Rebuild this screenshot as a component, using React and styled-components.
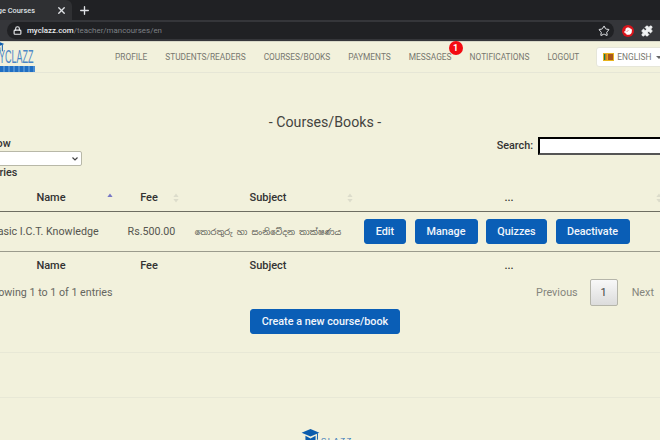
import React from 'react';
import styled, { createGlobalStyle } from 'styled-components';
import { Lock, Star, Plus, X, Puzzle, Hand } from 'lucide-react';

const GlobalStyle = createGlobalStyle`
  html, body {
    margin: 0;
    padding: 0;
    width: 660px;
    height: 440px;
    overflow: hidden;
    background: #f2f1dc;
    font-family: Roboto, "Liberation Sans", sans-serif;
  }
`;

const CapIcon = ({ size }) => (
  <svg width={size} height={size} viewBox="0 0 30 30">
    <path d="M1 9 L15 3 L29 9 L15 15 Z" fill="#0b5cad" />
    <path d="M7 14 L7 20 Q15 25 23 20 L23 14 L15 18 Z" fill="#0b5cad" />
    <path d="M26 10 L26 20" stroke="#0b5cad" strokeWidth="1.5" />
  </svg>
);

const Flag = () => (
  <svg width="11" height="8" viewBox="0 0 11 8">
    <rect width="11" height="8" fill="#e8b31c" />
    <rect x="1" y="1" width="1.6" height="6" fill="#1d7a4a" />
    <rect x="2.6" y="1" width="1.6" height="6" fill="#e8801c" />
    <rect x="5" y="1" width="5" height="6" fill="#a8571d" />
  </svg>
);

const SortMark = ({ active, left }) => (
  <SortIcon $left={left} viewBox="0 0 6 10">
    <path d="M3 0.5 L5.6 4 L0.4 4 Z" fill={active ? '#7777c4' : '#dcdccb'} />
    {!active && <path d="M3 9.5 L5.6 6 L0.4 6 Z" fill="#dcdccb" />}
  </SortIcon>
);

const App = () => {
  return (
    <>
      <GlobalStyle />
      <Browser>
        <TabStrip>
          <Tab>
            <TabTitle>Manage Courses</TabTitle>
            <TabClose size={11} strokeWidth={3} color="#dfe1e5" />
          </Tab>
          <Plus size={13} strokeWidth={2.5} color="#dfe1e5" />
        </TabStrip>
        <AddressRow>
          <UrlPill>
            <Lock size={9} strokeWidth={3} color="#e8eaed" />
            <Url>
              <b>myclazz.com</b>/teacher/mancourses/en
            </Url>
            <Star size={12} color="#e8eaed" />
          </UrlPill>
          <ExtBadge>
            <Hand size={8} strokeWidth={3} color="#fff" fill="#fff" />
          </ExtBadge>
          <ExtPuzzle size={12} color="#f1f3f4" fill="#f1f3f4" />
          <ProfileDot />
        </AddressRow>
      </Browser>

      <NavBar>
        <Brand>
          <BrandMark>
            <CapIcon size={20} />
          </BrandMark>
          <BrandName>YCLAZZ</BrandName>
          <BrandBar />
        </Brand>
        <NavList>
          <NavItem>Profile</NavItem>
          <NavItem>Students/Readers</NavItem>
          <NavItem>Courses/Books</NavItem>
          <NavItem>Payments</NavItem>
          <NavItem>
            Messages
            <Badge>1</Badge>
          </NavItem>
          <NavItem>Notifications</NavItem>
          <NavItem>Logout</NavItem>
        </NavList>
        <LangButton>
          <Flag />
          English
          <Caret />
        </LangButton>
      </NavBar>

      <Main>
        <Title>- Courses/Books -</Title>
        <Toolbar>
          <LengthControl>
            <Label>Show</Label>
            <Select>
              <option>10</option>
            </Select>
            <Label>entries</Label>
          </LengthControl>
          <SearchControl>
            <Label>Search:</Label>
            <SearchInput />
          </SearchControl>
        </Toolbar>

        <Table>
          <colgroup>
            <col width="138" />
            <col width="62" />
            <col width="176" />
            <col width="314" />
          </colgroup>
          <thead>
            <tr>
              <HeadCell $pad={4}>
                Name
                <SortMark active left={127} />
              </HeadCell>
              <HeadCell>
                Fee
                <SortMark left={55} />
              </HeadCell>
              <HeadCell>
                Subject
                <SortMark left={167} />
              </HeadCell>
              <HeadCell $action>
                ...
                <SortMark left={300} />
              </HeadCell>
            </tr>
          </thead>
          <tbody>
            <tr>
              <NameCell>Basic I.C.T. Knowledge</NameCell>
              <FeeCell>Rs.500.00</FeeCell>
              <SubjectCell>තොරතුරු හා සංනිවේදන තාක්ෂණය</SubjectCell>
              <ActionCell>
                <Actions>
                  <Button $width={42}>Edit</Button>
                  <Button $width={63}>Manage</Button>
                  <Button $width={61}>Quizzes</Button>
                  <Button $width={74}>Deactivate</Button>
                </Actions>
              </ActionCell>
            </tr>
          </tbody>
          <tfoot>
            <tr>
              <FootCell $pad={4}>Name</FootCell>
              <FootCell>Fee</FootCell>
              <FootCell>Subject</FootCell>
              <FootCell $action>...</FootCell>
            </tr>
          </tfoot>
        </Table>

        <TableInfo>
          <span>Showing 1 to 1 of 1 entries</span>
          <Pagination>
            <PageLink>Previous</PageLink>
            <PageCurrent>1</PageCurrent>
            <PageLink>Next</PageLink>
          </Pagination>
        </TableInfo>

        <CreateRow>
          <CreateButton>Create a new course/book</CreateButton>
        </CreateRow>
      </Main>

      <Divider $top={18} />
      <Divider $top={44} />

      <Footer>
        <CapIcon size={19} />
        <FooterName>CLAZZ</FooterName>
      </Footer>
    </>
  );
};

const Browser = styled.div`
  background: #202124;
`;

const TabStrip = styled.div`
  display: flex;
  align-items: center;
  gap: 6px;
  height: 20px;
`;

const Tab = styled.div`
  display: flex;
  align-items: center;
  justify-content: flex-end;
  gap: 21px;
  width: 67px;
  height: 20px;
  padding-right: 5px;
  background: #2f3033;
  border-top-right-radius: 6px;
  overflow: hidden;
`;

const TabTitle = styled.span`
  flex: none;
  color: #dfe1e5;
  font-size: 7.4px;
  font-weight: 500;
  white-space: nowrap;
`;

const TabClose = styled(X)`
  flex: none;
`;

const AddressRow = styled.div`
  display: flex;
  align-items: center;
  gap: 7px;
  height: 21px;
  padding-left: 7px;
  background: #35363a;
  border-bottom: 1px solid #d8d8c8;
  overflow: hidden;
`;

const UrlPill = styled.div`
  flex: none;
  display: flex;
  align-items: center;
  gap: 5px;
  width: 607px;
  height: 17px;
  margin-right: 1px;
  padding: 0 4px 0 6px;
  box-sizing: border-box;
  border-radius: 9px;
  background: #202124;
`;

const Url = styled.span`
  flex: 1;
  color: #7d8084;
  font-size: 7.9px;
  b {
    color: #e8eaed;
    font-weight: 500;
  }
`;

const ExtBadge = styled.div`
  flex: none;
  display: flex;
  align-items: center;
  justify-content: center;
  width: 12px;
  height: 12px;
  border-radius: 50%;
  background: #d9141b;
`;

const ExtPuzzle = styled(Puzzle)`
  flex: none;
`;

const ProfileDot = styled.div`
  flex: none;
  width: 6px;
  height: 10px;
  border-radius: 50%;
  background: #9aa0a6;
`;

const NavBar = styled.nav`
  display: flex;
  align-items: center;
  height: 30px;
  border-bottom: 1px solid #e6e6d6;
`;

const Brand = styled.div`
  position: relative;
  flex: none;
  width: 115px;
  height: 30px;
  overflow: hidden;
`;

const BrandMark = styled.div`
  position: absolute;
  top: -4px;
  left: -15px;
`;

const BrandName = styled.div`
  position: absolute;
  top: 6px;
  left: -1px;
  color: #4a86c5;
  font-family: "Liberation Sans", sans-serif;
  font-size: 18px;
  line-height: 18px;
  white-space: nowrap;
  transform: scaleX(0.5);
  transform-origin: left;
`;

const BrandBar = styled.div`
  position: absolute;
  top: 24px;
  left: 0;
  width: 35px;
  height: 6px;
  background: repeating-linear-gradient(90deg, #1f6ec2 0 3px, #4a8dd2 3px 5px);
`;

const NavList = styled.div`
  display: flex;
  gap: 18px;
`;

const NavItem = styled.span`
  position: relative;
  color: #77776f;
  font-size: 8.35px;
  text-transform: uppercase;
  white-space: nowrap;
`;

const Badge = styled.span`
  position: absolute;
  top: -11px;
  right: -11px;
  width: 14px;
  height: 14px;
  border-radius: 50%;
  background: #f30b12;
  color: #fff;
  font-size: 9px;
  font-weight: 700;
  line-height: 14px;
  text-align: center;
`;

const LangButton = styled.div`
  flex: none;
  display: flex;
  align-items: center;
  gap: 3px;
  width: 70px;
  height: 20px;
  margin-left: 17px;
  padding-left: 6px;
  box-sizing: border-box;
  background: #fff;
  border: 1px solid #e6e6d9;
  border-radius: 3px;
  color: #77776f;
  font-size: 8.35px;
  text-transform: uppercase;
`;

const Caret = styled.span`
  margin-left: 2px;
  border-top: 3px solid #666;
  border-left: 3px solid transparent;
  border-right: 3px solid transparent;
`;

const Main = styled.main`
  width: 690px;
  margin-left: -20px;
`;

const Title = styled.h2`
  margin: 0;
  padding: 40px 0 1px;
  color: #44443f;
  font-size: 14.2px;
  font-weight: 400;
  line-height: 18px;
  text-align: center;
`;

const Toolbar = styled.div`
  display: flex;
  justify-content: space-between;
  height: 51px;
`;

const Label = styled.div`
  color: #333;
  font-size: 10.8px;
  font-weight: 500;
  line-height: 14px;
`;

const LengthControl = styled.div`
  display: flex;
  flex-direction: column;
  width: 98px;
  margin-left: 4px;
  padding-top: 5px;
`;

const Select = styled.select`
  appearance: none;
  width: 98px;
  height: 15px;
  margin: 0;
  padding: 0;
  background: #fff url("data:image/svg+xml,%3Csvg xmlns='http://www.w3.org/2000/svg' width='6' height='4'%3E%3Cpath d='M0.5 0.5 L3 3 L5.5 0.5' fill='none' stroke='%23444' stroke-width='1.2'/%3E%3C/svg%3E") no-repeat right 3px center;
  border: 1px solid #b8b8a8;
  border-radius: 2px;
  color: #555;
  font-size: 9px;
`;

const SearchControl = styled.div`
  display: flex;
  align-items: center;
  gap: 5px;
  height: 18px;
  padding-top: 5px;
`;

const SearchInput = styled.input`
  width: 132px;
  height: 18px;
  padding: 0;
  box-sizing: border-box;
  background: #fff;
  border: 2px inset #555;
`;

const Table = styled.table`
  width: 690px;
  table-layout: fixed;
  border-collapse: collapse;
`;

const HeadCell = styled.th`
  position: relative;
  height: 28px;
  padding: 0 ${(p) => (p.$action ? '8px' : '0')} 0 ${(p) => p.$pad || 0}px;
  border-bottom: 1px solid #6e6e62;
  color: #333;
  font-size: 11px;
  font-weight: 500;
  text-align: center;
`;

const SortIcon = styled.svg`
  position: absolute;
  top: 10px;
  left: ${(p) => p.$left}px;
  width: 6px;
  height: 10px;
`;

const BodyCell = styled.td`
  height: 39px;
  padding: 0;
  border-bottom: 1px solid #9b9b8d;
  color: #55554f;
  font-size: 10.7px;
  text-align: center;
`;

const NameCell = styled(BodyCell)`
  padding-left: 11px;
  text-align: left;
  white-space: nowrap;
`;

const FeeCell = styled(BodyCell)`
  padding-left: 5px;
  white-space: nowrap;
`;

const SubjectCell = styled(BodyCell)`
  font-family: "Noto Sans Sinhala", "Noto Sans", sans-serif;
  font-size: 8.3px;
  white-space: nowrap;
`;

const ActionCell = styled(BodyCell)`
  padding-left: 8px;
  text-align: left;
`;

const Actions = styled.div`
  display: flex;
  gap: 8.5px;
`;

const Button = styled.button`
  flex: none;
  width: ${(p) => p.$width}px;
  height: 25px;
  padding: 0;
  background: #0a5eb6;
  border: 1px solid #0a5eb6;
  border-radius: 3px;
  color: #f2f6fb;
  font-family: inherit;
  font-size: 10.8px;
  font-weight: 500;
`;

const FootCell = styled.td`
  height: 27px;
  padding: 0 ${(p) => (p.$action ? '8px' : '0')} 0 ${(p) => p.$pad || 0}px;
  color: #333;
  font-size: 11px;
  font-weight: 500;
  text-align: center;
`;

const TableInfo = styled.div`
  display: flex;
  align-items: center;
  justify-content: space-between;
  width: 674px;
  height: 27px;
  padding-left: 6px;
  box-sizing: border-box;
  color: #666660;
  font-size: 10.7px;
`;

const Pagination = styled.div`
  display: flex;
  align-items: center;
  gap: 12px;
`;

const PageLink = styled.span`
  color: #85857c;
  font-size: 10.8px;
`;

const PageCurrent = styled.span`
  width: 28px;
  height: 27px;
  margin-right: 2px;
  box-sizing: border-box;
  background: linear-gradient(#f8f8f8, #dcdcdc);
  border: 1px solid #b5b5aa;
  border-radius: 2px;
  color: #444;
  font-size: 11px;
  line-height: 25px;
  text-align: center;
`;

const CreateRow = styled.div`
  display: flex;
  padding: 3px 0 0 270px;
`;

const CreateButton = styled(Button)`
  width: 150px;
`;

const Divider = styled.hr`
  width: 660px;
  margin: ${(p) => p.$top}px 0 0;
  border: 0;
  border-top: 1px solid #e8e8d6;
`;

const Footer = styled.footer`
  display: flex;
  align-items: flex-start;
  gap: 1px;
  padding: 29px 0 0 301px;
`;

const FooterName = styled.span`
  margin-top: 9px;
  color: #2d72b8;
  font-size: 8px;
  letter-spacing: 1.5px;
`;

export default App;
